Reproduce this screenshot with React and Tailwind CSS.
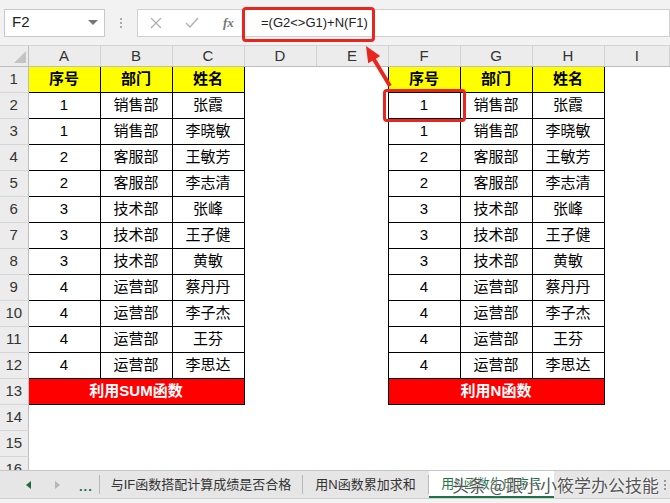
import React from 'react';

const rows = [
  ['1', '销售部', '张霞'],
  ['1', '销售部', '李晓敏'],
  ['2', '客服部', '王敏芳'],
  ['2', '客服部', '李志清'],
  ['3', '技术部', '张峰'],
  ['3', '技术部', '王子健'],
  ['3', '技术部', '黄敏'],
  ['4', '运营部', '蔡丹丹'],
  ['4', '运营部', '李子杰'],
  ['4', '运营部', '王芬'],
  ['4', '运营部', '李思达'],
];

const letters = ['A', 'B', 'C', 'D', 'E', 'F', 'G', 'H', 'I'];

const font = { fontFamily: '"Liberation Sans", "Noto Sans CJK SC", sans-serif' };

const cell = 'border border-black text-center text-[15px] text-black';
const rowHead = 'bg-[#ececec] border-r border-b border-r-[#bdbdbd] border-b-[#d6d6d6] text-center align-bottom pb-[1px] text-[15px] text-[#333]';

function SheetRow({ n, children }) {
  return (
    <tr className="h-[26px]">
      <td className={rowHead}>{n}</td>
      {children}
    </tr>
  );
}

function Blank({ n = 1 }) {
  return Array.from({ length: n }).map((_, i) => <td key={i} />);
}

export default function App() {
  return (
    <div className="relative w-[670px] h-[503px] overflow-hidden bg-white" style={font}>
      {/* formula bar */}
      <div className="flex items-center h-[46px] bg-[#f2f2f2] border-b border-[#d4d4d4]">
        <div className="ml-[4px] w-[101px] h-[28px] bg-white border border-[#c8c8c8] flex items-center justify-between pl-[7px] pr-[6px]">
          <span className="text-[15px] text-[#222]">F2</span>
          <span className="w-0 h-0 border-l-[5px] border-r-[5px] border-t-[5px] border-l-transparent border-r-transparent border-t-[#777]" />
        </div>
        <div className="w-[32px] flex flex-col items-center gap-[2px]">
          <span className="w-[2px] h-[2px] bg-[#aaa]" />
          <span className="w-[2px] h-[2px] bg-[#aaa]" />
          <span className="w-[2px] h-[2px] bg-[#aaa]" />
        </div>
        <div className="flex-1 h-[28px] bg-white border border-[#d0d0d0] flex items-center">
          <div className="w-[104px] flex items-center h-full">
            <svg width="12" height="12" viewBox="0 0 12 12" className="ml-[12px]">
              <path d="M1 1 L11 11 M11 1 L1 11" stroke="#b0b0b0" strokeWidth="1.3" />
            </svg>
            <svg width="14" height="12" viewBox="0 0 14 12" className="ml-[23px]">
              <path d="M1 6 L5 10 L13 1" stroke="#b0b0b0" strokeWidth="1.4" fill="none" />
            </svg>
            <span className="ml-[24px] text-[13px] italic font-bold text-[#777]" style={{ fontFamily: '"Liberation Serif", serif' }}>fx</span>
          </div>
          <div className="h-full border-l border-[#d0d0d0] flex items-center pl-[18px] text-[13px] text-[#222]">
            =(G2&lt;&gt;G1)+N(F1)
          </div>
        </div>
      </div>

      {/* sheet */}
      <div className="h-[424px] overflow-hidden">
        <table className="table-fixed border-collapse w-[670px]">
          <colgroup>
            <col className="w-[28px]" />
            {letters.slice(0, 8).map((l) => (
              <col key={l} className="w-[72px]" />
            ))}
            <col />
          </colgroup>
          <tbody>
            <tr className="h-[20px]">
              <td className="bg-[#ececec] border-r border-b border-[#bdbdbd] relative">
                <svg width="12" height="12" className="absolute right-[2px] bottom-[3px]">
                  <polygon points="12,0 12,12 0,12" fill="#c4c4c4" />
                </svg>
              </td>
              {letters.map((l) => (
                <td key={l} className="bg-[#ececec] border-r border-b border-r-[#d2d2d2] border-b-[#bdbdbd] text-center text-[15px] text-[#333] leading-none">
                  {l}
                </td>
              ))}
            </tr>
            <SheetRow n={1}>
              {['序号', '部门', '姓名'].map((h) => (
                <td key={h} className={`${cell} bg-[#ffff00] font-bold`}>{h}</td>
              ))}
              <Blank n={2} />
              {['序号', '部门', '姓名'].map((h) => (
                <td key={'r' + h} className={`${cell} bg-[#ffff00] font-bold`}>{h}</td>
              ))}
              <Blank />
            </SheetRow>
            {rows.map((r, i) => (
              <SheetRow key={i} n={i + 2}>
                {r.map((v, j) => (
                  <td key={j} className={cell}>{v}</td>
                ))}
                <Blank n={2} />
                {r.map((v, j) => (
                  <td key={'r' + j} className={cell}>{v}</td>
                ))}
                <Blank />
              </SheetRow>
            ))}
            <SheetRow n={13}>
              <td colSpan={3} className={`${cell} bg-[#ff0000] text-white font-bold`}>利用SUM函数</td>
              <Blank n={2} />
              <td colSpan={3} className={`${cell} bg-[#ff0000] text-white font-bold`}>利用N函数</td>
              <Blank />
            </SheetRow>
            {[14, 15, 16].map((n) => (
              <SheetRow key={n} n={n}>
                <Blank n={9} />
              </SheetRow>
            ))}
          </tbody>
        </table>
      </div>

      {/* sheet tabs */}
      <div className="h-[28px] bg-[#e6e6e6] border-t border-[#c6c6c6] flex items-stretch text-[13px] text-[#333]">
        <div className="w-[100px] flex items-center border-r border-[#b8b8b8] my-[4px]">
          <span className="ml-[26px] w-0 h-0 border-t-[4px] border-b-[4px] border-r-[5px] border-t-transparent border-b-transparent border-r-[#1e6b3c]" />
          <span className="ml-[24px] w-0 h-0 border-t-[4px] border-b-[4px] border-l-[5px] border-t-transparent border-b-transparent border-l-[#b5b5b5]" />
          <span className="ml-[19px] text-[#1e6b3c] font-bold text-[13px] tracking-[1px] leading-none pt-[4px]">...</span>
        </div>
        <div className="w-[203px] flex items-center justify-center border-r border-[#b8b8b8] my-[4px]">与IF函数搭配计算成绩是否合格</div>
        <div className="w-[126px] flex items-center justify-center border-r border-[#b8b8b8] my-[4px]">用N函数累加求和</div>
        <div className="w-[125px] bg-white border-b-2 border-[#217346] flex items-center justify-center text-[#217346]">用N函数生成序号</div>
        <div className="flex-1 flex items-center justify-end pr-[4px]">
          <div className="flex flex-col gap-[2px]">
            <span className="w-[2px] h-[2px] bg-[#999]" />
            <span className="w-[2px] h-[2px] bg-[#999]" />
            <span className="w-[2px] h-[2px] bg-[#999]" />
          </div>
        </div>
      </div>
      <div className="h-[5px] bg-[#f3f3f3] border-t border-[#d0d0d0]" />

      {/* overlays */}
      <div className="absolute left-[242px] top-[7px] w-[133px] h-[35px] border-[3px] border-[#e8251f] rounded-[4px]" />
      <div className="absolute left-[383px] top-[89px] w-[83px] h-[33px] border-[3px] border-[#e8251f] rounded-[4px]" />
      <svg className="absolute left-[355px] top-[40px]" width="45" height="50" viewBox="0 0 45 50">
        <polygon points="11,6 25.2,16.1 20.9,18.7 36.7,45 33.3,47 17.5,20.7 13.2,23.3" fill="#e8251f" />
      </svg>
      <div className="absolute left-[452px] top-[472px] text-[17px] text-[#555] [text-shadow:0_0_2px_#fff,0_0_2px_#fff] whitespace-nowrap" style={{ fontFamily: '"Noto Sans CJK SC", sans-serif' }}>
        头条 @跟小小筱学办公技能
      </div>
    </div>
  );
}
